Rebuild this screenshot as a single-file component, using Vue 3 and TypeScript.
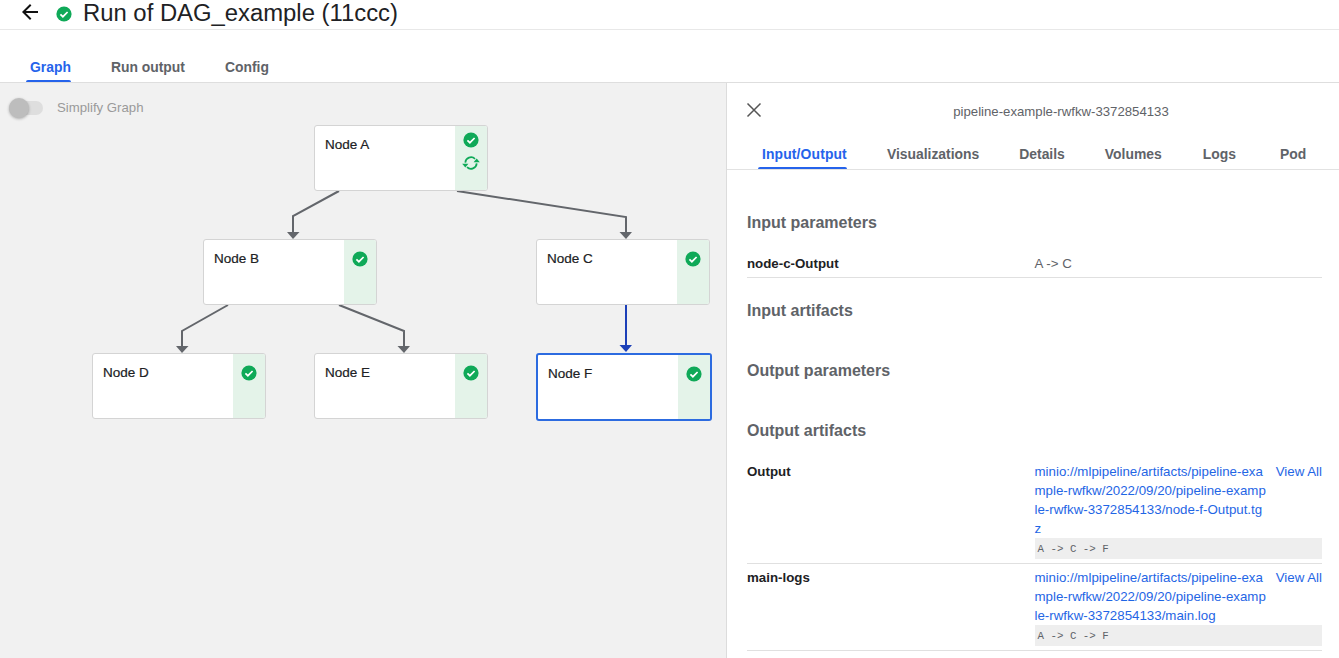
<script setup lang="ts">
interface GraphNode { name: string; x: number; y: number; selected?: boolean; retry?: boolean }
const nodes: GraphNode[] = [
  { name: 'Node A', x: 314, y: 42, retry: true },
  { name: 'Node B', x: 203, y: 156 },
  { name: 'Node C', x: 536, y: 156 },
  { name: 'Node D', x: 92, y: 270 },
  { name: 'Node E', x: 314, y: 270 },
  { name: 'Node F', x: 536, y: 270, selected: true },
]
const edges = [
  { d: 'M339 108 L293 133 V149', head: '287,149 299.500,149 293,156', blue: false },
  { d: 'M457 108 L626 134 V149', head: '619.500,149 632,149 626,156', blue: false },
  { d: 'M228 222 L182 248 V263', head: '176,263 188.500,263 182,270', blue: false },
  { d: 'M339 222 L404 248 V263', head: '397.500,263 410,263 404,270', blue: false },
  { d: 'M626 222 V263', head: '619.500,262 632,262 626,269', blue: true },
]
const mainTabs = ['Graph', 'Run output', 'Config']
const sideTabs = ['Input/Output', 'Visualizations', 'Details', 'Volumes', 'Logs', 'Pod']
const artifacts = [
  { key: 'Output', url: 'minio://mlpipeline/artifacts/pipeline-example-rwfkw/2022/09/20/pipeline-example-rwfkw-3372854133/node-f-Output.tgz' },
  { key: 'main-logs', url: 'minio://mlpipeline/artifacts/pipeline-example-rwfkw/2022/09/20/pipeline-example-rwfkw-3372854133/main.log' },
]
</script>

<template>
  <div class="page">
    <header class="topbar">
      <svg class="back" width="24" height="24" viewBox="0 0 24 24"><path d="M20 11H7.830l5.590-5.590L12 4l-8 8 8 8 1.410-1.410L7.830 13H20v-2z" fill="#111" /></svg>
      <svg class="status" width="18" height="18" viewBox="0 0 18 18"><circle cx="9" cy="9" r="7.600" fill="#0fa958" /><path d="M5.400 9.300l2.500 2.400 4.700-4.700" fill="none" stroke="#fff" stroke-width="1.700" /></svg>
      <h1 class="title">Run of DAG_example (11ccc)</h1>
    </header>
    <nav class="tabs main-tabs">
      <span v-for="(t, i) in mainTabs" :key="t" class="tab" :class="{ active: i === 0 }">{{ t }}</span>
    </nav>
    <main class="content">
      <section class="graph">
        <div class="simplify">
          <span class="track"><span class="thumb"></span></span>
          <span>Simplify Graph</span>
        </div>
        <svg class="edges" width="726" height="575" viewBox="0 0 726 575">
          <g v-for="e in edges" :key="e.d">
            <path :d="e.d" fill="none" :stroke="e.blue ? '#1c40b8' : '#63666b'" stroke-width="2" />
            <polygon :points="e.head" :fill="e.blue ? '#1c40b8' : '#63666b'" />
          </g>
        </svg>
        <div
          v-for="n in nodes"
          :key="n.name"
          class="node"
          :class="{ selected: n.selected }"
          :style="{ left: n.x + 'px', top: n.y + 'px' }"
        >
          <span class="node-name">{{ n.name }}</span>
          <span class="strip" :class="{ double: n.retry }">
            <svg width="18" height="18" viewBox="0 0 18 18"><circle cx="9" cy="9" r="7.600" fill="#0fa958" /><path d="M5.400 9.300l2.500 2.400 4.700-4.700" fill="none" stroke="#fff" stroke-width="1.700" /></svg>
            <svg v-if="n.retry" class="retry" width="18" height="18" viewBox="0 0 18 18">
              <path d="M3.300 8.600A5.700 5.700 0 0 1 13 4.900" fill="none" stroke="#0fa958" stroke-width="1.700" />
              <path d="M14.700 9.400A5.700 5.700 0 0 1 5 13.100" fill="none" stroke="#0fa958" stroke-width="1.700" />
              <path d="M11.600 8.300h6.200l-3.100-3.700z" fill="#0fa958" />
              <path d="M0.200 9.700h6.200l-3.100 3.700z" fill="#0fa958" />
            </svg>
          </span>
        </div>
      </section>
      <aside class="panel">
        <div class="panel-head">
          <svg class="close" width="16" height="16" viewBox="0 0 16 16"><path d="M1.500 1.500l13 13M14.500 1.500l-13 13" stroke="#555" stroke-width="1.500" fill="none" /></svg>
          <span class="panel-title">pipeline-example-rwfkw-3372854133</span>
        </div>
        <nav class="tabs side-tabs">
          <span v-for="(t, i) in sideTabs" :key="t" class="tab" :class="{ active: i === 0 }">{{ t }}</span>
        </nav>
        <div class="io">
          <h2 class="first">Input parameters</h2>
          <div class="row param">
            <b>node-c-Output</b>
            <span class="value">A -&gt; C</span>
          </div>
          <h2 class="after-row">Input artifacts</h2>
          <h2 class="spaced">Output parameters</h2>
          <h2 class="spaced">Output artifacts</h2>
          <div v-for="a in artifacts" :key="a.key" class="row artifact">
            <b>{{ a.key }}</b>
            <div class="artifact-body">
              <div class="link-line">
                <span class="url">{{ a.url }}</span>
                <span class="view">View All</span>
              </div>
              <code class="preview">A -&gt; C -&gt; F</code>
            </div>
          </div>
        </div>
      </aside>
    </main>
  </div>
</template>

<style>
html, body { margin: 0; overflow: hidden; background: #fff; }
</style>

<style scoped>
.page { width: 1339px; height: 658px; overflow: hidden; font-family: "Liberation Sans", Arial, sans-serif; color: #202124; }
.topbar { height: 29px; border-bottom: 1px solid #e8e8e8; display: flex; align-items: flex-start; padding-left: 18px; }
.back { margin-top: 0; }
.status { margin-left: 13px; margin-top: 5px; }
.title { margin: 1px 0 0 10px; font-size: 23.850px; font-weight: 400; line-height: 24px; color: #202124; white-space: nowrap; }
.tabs { display: flex; font-size: 13.900px; font-weight: 700; color: #5f6368; }
.tab { position: relative; margin-right: 40px; white-space: nowrap; }
.tab.active { color: #2563eb; }
.tab.active::after { content: ""; position: absolute; left: -4px; right: 0; bottom: 0; height: 2px; background: #2563eb; border-radius: 2px 2px 0 0; }
.main-tabs { height: 52px; padding-left: 30px; border-bottom: 1px solid #dedede; align-items: stretch; }
.main-tabs .tab { padding-top: 29px; line-height: 16px; }
.content { display: flex; height: 575px; }
.graph { position: relative; width: 726px; flex: none; background: #f1f1f1; border-right: 1px solid #dcdcdc; }
.simplify { display: flex; align-items: center; gap: 14px; padding: 15px 0 0 9px; font-size: 13.200px; line-height: 20px; color: #9a9a9a; }
.track { position: relative; display: block; width: 34px; height: 14px; border-radius: 7px; background: #dedede; }
.thumb { position: absolute; left: 0; top: -3px; width: 20px; height: 20px; border-radius: 50%; background: #bdbdbd; box-shadow: 0 1px 3px rgba(0,0,0,.3); }
.edges { position: absolute; left: 0; top: 0; }
.node { position: absolute; width: 174px; height: 66px; box-sizing: border-box; display: flex; justify-content: space-between; background: #fff; border: 1px solid #d4d4d4; border-radius: 3px; overflow: hidden; }
.node.selected { width: 176px; height: 68px; border: 2px solid #2c6be0; }
.node-name { padding: 11px 0 0 10px; font-size: 13.500px; line-height: 16px; color: #202124; -webkit-text-stroke: 0.200px #202124; }
.strip { width: 32px; background: #e4f3e9; display: flex; flex-direction: column; align-items: center; padding-top: 10px; box-sizing: border-box; }
.strip.double { padding-top: 5px; }
.retry { margin-top: 5px; }
.panel { flex: 1; min-width: 0; }
.panel-head { position: relative; height: 53px; display: flex; align-items: center; justify-content: center; padding-left: 56px; }
.close { position: absolute; left: 19px; top: 19px; }
.panel-title { font-size: 13.200px; color: #5f6368; position: relative; top: 2px; line-height: 16px; }
.side-tabs { height: 33px; padding-left: 35px; border-bottom: 1px solid #e2e2e2; }
.side-tabs .tab { padding-top: 10px; line-height: 16px; height: 23px; }
.side-tabs .tab:nth-child(1) { letter-spacing: 0.130px; }
.side-tabs .tab:nth-child(5) { margin-right: 44px; }
.side-tabs .tab:nth-child(4) { margin-right: 41px; }
.io { padding: 0 17px 0 20px; }
h2 { margin: 0; font-size: 16px; line-height: 20px; font-weight: 700; color: #5f6368; }
h2.first { padding-top: 43px; }
h2.after-row { padding-top: 23px; }
h2.spaced { padding-top: 40px; }
.row { display: grid; grid-template-columns: 287.500px minmax(0, 1fr); font-size: 13.300px; line-height: 19px; border-bottom: 1px solid #e0e0e0; }
.row b { color: #202124; }
.param { margin-top: 21px; height: 23px; }
.value { color: #5f6368; }
.artifact { padding: 4px 0; }
h2 + .artifact { margin-top: 17px; }
.link-line { display: flex; justify-content: space-between; }
.url { width: 234px; word-break: break-all; color: #1f66e5; }
.view { color: #1f66e5; white-space: nowrap; }
.preview { display: block; height: 21px; padding-left: 3px; background: #eeeeee; font-family: "Liberation Mono", monospace; font-size: 10.800px; line-height: 23px; color: #5f6368; overflow: hidden; }
</style>
